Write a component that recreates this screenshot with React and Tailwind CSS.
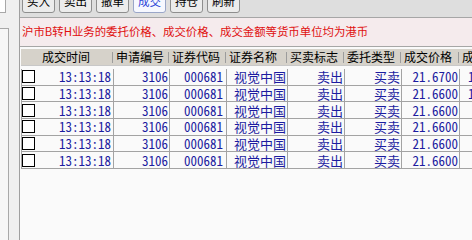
const buttons = ["买入", "卖出", "撤单", "成交", "持仓", "刷新"];

const headers = ["成交时间", "申请编号", "证券代码", "证券名称", "买卖标志", "委托类型", "成交价格", "成交金额"];

const rows = [
  { time: "13:13:18", id: "3106", code: "000681", name: "视觉中国", side: "卖出", type: "买卖", price: "21.6700", amount: "10835.00" },
  { time: "13:13:18", id: "3106", code: "000681", name: "视觉中国", side: "卖出", type: "买卖", price: "21.6600", amount: "10830.00" },
  { time: "13:13:18", id: "3106", code: "000681", name: "视觉中国", side: "卖出", type: "买卖", price: "21.6600", amount: "866.40" },
  { time: "13:13:18", id: "3106", code: "000681", name: "视觉中国", side: "卖出", type: "买卖", price: "21.6600", amount: "866.40" },
  { time: "13:13:18", id: "3106", code: "000681", name: "视觉中国", side: "卖出", type: "买卖", price: "21.6600", amount: "866.40" },
  { time: "13:13:18", id: "3106", code: "000681", name: "视觉中国", side: "卖出", type: "买卖", price: "21.6600", amount: "866.40" },
];

const cols = "grid grid-cols-[92px_56px_57px_61px_57px_57px_58px_62px]";
const mono = "font-['Noto_Sans_Mono_CJK_SC','Noto_Sans_CJK_SC',monospace]";

function Cell({ children }) {
  return (
    <div className="h-full border-r border-[#a3a3a3] flex items-center justify-end pr-[1px] whitespace-nowrap overflow-hidden">
      {children}
    </div>
  );
}

export default function App() {
  return (
    <div className="w-[472px] h-[240px] flex overflow-hidden bg-[#fafafa] font-['Noto_Sans_CJK_SC',sans-serif]">
      {/* left frame strip */}
      <div className="w-[20px] shrink-0 flex flex-col bg-[#f0f0f0] border-r border-[#a0a0a0]">
        <div className="w-[6px] h-[13px] bg-white border-r border-b border-[#a8a8a8]" />
        <div className="h-[15px]" />
        <div className="w-[9px] flex-1 bg-[#f6f6f6] border-t border-r border-[#a8a8a8]" />
      </div>

      <div className="flex-1 flex flex-col min-w-0">
        {/* toolbar */}
        <div className="h-[18px] shrink-0 bg-[#dedede] border-b border-[#a6a6a6] flex items-start gap-[4px] pl-[2px] overflow-hidden">
          {buttons.map((b) => (
            <div
              key={b}
              className={
                "-mt-[10px] w-[33px] h-[23px] shrink-0 flex items-center justify-center text-[11.5px] leading-none rounded-b-[3px] border " +
                (b === "成交"
                  ? "bg-[#f6f8ff] border-[#9aa6c8] text-[#2a44d8]"
                  : "bg-[#ececec] border-[#8e8e8e] text-black")
              }
            >
              {b}
            </div>
          ))}
        </div>

        {/* notice */}
        <div className="h-[29px] shrink-0 bg-[#f5ebed] border-b border-[#a6a6a6] flex items-center pl-[2px] text-[11.4px] text-[#e01010] whitespace-nowrap overflow-hidden">
          沪市B转H业务的委托价格、成交价格、成交金额等货币单位均为港币
        </div>

        {/* table */}
        <div className="pt-[2px] pl-[1px]">
          <div className={cols + " h-[17px] bg-[#d6d2ca] border-b border-[#c8c8c8] pl-[1px] text-[12px] text-black leading-none"}>
            {headers.map((h, i) => (
              <div key={h} className="h-full flex items-center justify-between whitespace-nowrap overflow-hidden">
                <span className={i === 0 ? "pl-[20px]" : "pl-[2px]"}>{h}</span>
                {i < headers.length - 1 && <span className="w-[1px] h-[11px] bg-[#9c9c9c] mr-[1px]" />}
              </div>
            ))}
          </div>

          <div className={"mt-[3px] text-[13px] text-[#1c1ca0] leading-none " + mono}>
            {rows.map((r, i) => (
              <div key={i} className={cols + " h-[16.67px] border-l border-b border-[#a3a3a3]"}>
                <div className="h-full border-r border-[#a3a3a3] flex items-center justify-between pr-[2px]">
                  <span className="w-[13px] h-[13px] border border-black bg-white" />
                  <span>{r.time}</span>
                </div>
                <Cell>{r.id}</Cell>
                <div className="h-full border-r border-[#a3a3a3] flex items-center justify-end pr-[3px]">{r.code}</div>
                <Cell>{r.name}</Cell>
                <Cell>{r.side}</Cell>
                <Cell>{r.type}</Cell>
                <Cell>{r.price}</Cell>
                <div className="h-full flex items-center justify-end pr-[2px] whitespace-nowrap">{r.amount}</div>
              </div>
            ))}
          </div>
        </div>
      </div>
    </div>
  );
}
